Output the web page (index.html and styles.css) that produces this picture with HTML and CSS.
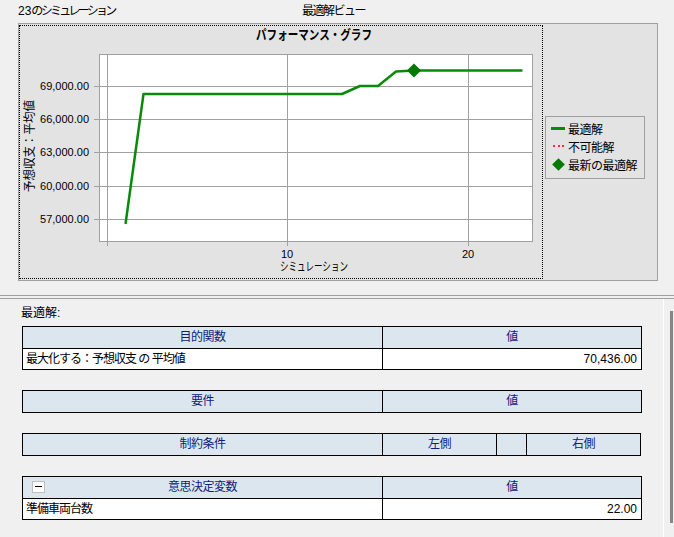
FILE: index.html
```html
<!DOCTYPE html>
<html lang="ja">

<head>
    <meta charset="UTF-8">
    <meta name="viewport" content="width=device-width, initial-scale=1.0">
    <title>最適解ビュー</title>
    <link rel="stylesheet" href="styles.css">
</head>

<body>
    <div class="top">
        <span class="sim-count"><span class="count">23</span>のシミュレーション</span>
        <span class="view-title">最適解ビュー</span>
    </div>

    <div class="chart-panel">
        <div class="plot-frame">
            <svg class="chart" viewBox="20 26 522 252" width="522" height="252">
                <text class="chart-title" x="314" y="39" text-anchor="middle" textLength="116" lengthAdjust="spacingAndGlyphs">パフォーマンス・グラフ</text>
                <rect x="99.5" y="54.5" width="433" height="187" fill="#fff" stroke="#a0a0a0" />
                <g stroke="#a0a0a0" stroke-width="1">
                    <line x1="94" y1="86.5" x2="532" y2="86.5" />
                    <line x1="94" y1="119.5" x2="532" y2="119.5" />
                    <line x1="94" y1="152.5" x2="532" y2="152.5" />
                    <line x1="94" y1="186.5" x2="532" y2="186.5" />
                    <line x1="94" y1="219.5" x2="532" y2="219.5" />
                    <line x1="107.5" y1="54" x2="107.5" y2="246" />
                    <line x1="287.5" y1="54" x2="287.5" y2="246" />
                    <line x1="468.5" y1="54" x2="468.5" y2="246" />
                </g>
                <g class="tick-label" text-anchor="end">
                    <text x="89" y="90">69,000.00</text>
                    <text x="89" y="123">66,000.00</text>
                    <text x="89" y="156">63,000.00</text>
                    <text x="89" y="190">60,000.00</text>
                    <text x="89" y="223">57,000.00</text>
                </g>
                <g class="tick-label" text-anchor="middle">
                    <text x="287" y="258">10</text>
                    <text x="468" y="258">20</text>
                </g>
                <text class="axis-title" x="314" y="271" text-anchor="middle" textLength="68" lengthAdjust="spacingAndGlyphs">シミュレーション</text>
                <text class="axis-title" x="33.5" y="146" text-anchor="middle" transform="rotate(-90 33.5 146)" textLength="92" lengthAdjust="spacingAndGlyphs">予想収支：平均値</text>
                <polyline fill="none" stroke="#0a8a0a" stroke-width="2.5" stroke-linejoin="round"
                    points="125.5,224 143.5,94 342,94 360,86 378,86 396,71.5 414,70.5 522.5,70.5" />
                <rect x="409" y="65.5" width="10" height="10" fill="#007a00" transform="rotate(45 414 70.5)" />
            </svg>
        </div>

        <div class="legend">
            <div class="legend-item"><span class="swatch"><span class="sw-line"></span></span>最適解</div>
            <div class="legend-item"><span class="swatch"><span class="sw-dots"></span></span>不可能解</div>
            <div class="legend-item"><span class="swatch"><span class="sw-diamond"></span></span>最新の最適解</div>
        </div>
    </div>

    <div class="splitter"></div>

    <div class="results">
        <div class="results-body">
            <div class="results-label">最適解:</div>

            <div class="grid-table two-col">
                <div class="head">目的関数</div>
                <div class="head last">値</div>
                <div class="cell">最大化する：予想収支 の 平均値</div>
                <div class="cell num last">70,436.00</div>
            </div>

            <div class="grid-table two-col">
                <div class="head bottom">要件</div>
                <div class="head bottom last">値</div>
            </div>

            <div class="grid-table four-col">
                <div class="head bottom">制約条件</div>
                <div class="head bottom">左側</div>
                <div class="head bottom"></div>
                <div class="head bottom last">右側</div>
            </div>

            <div class="grid-table two-col">
                <div class="head toggle-head"><span class="toggle"></span>意思決定変数</div>
                <div class="head last">値</div>
                <div class="cell">準備車両台数</div>
                <div class="cell num last">22.00</div>
            </div>
        </div>

        <div class="scrollbar">
            <div class="thumb"></div>
        </div>
    </div>
</body>

</html>
```

FILE: styles.css
```css
* {
    margin: 0;
    padding: 0;
    box-sizing: border-box;
}

body {
    width: 674px;
    height: 537px;
    overflow: hidden;
    background-color: #f0f0f0;
    font-family: "Liberation Sans", "Noto Sans CJK JP", sans-serif;
    font-size: 12px;
    color: #000;
}

.top {
    display: flex;
    height: 23px;
    padding-left: 18px;
    line-height: 22px;
}

.sim-count {
    width: 284px;
    letter-spacing: -2.7px;
}

.sim-count .count {
    letter-spacing: 0;
}

.view-title {
    letter-spacing: -1.5px;
}

/* chart */

.chart-panel {
    display: flex;
    width: 640px;
    height: 258px;
    margin-left: 18px;
    padding-top: 1px;
    background-color: #e3e3e3;
    border: 1px solid #a0a0a0;
}

.plot-frame {
    width: 524px;
    height: 254px;
    border: 1px dotted #000;
}

.chart {
    display: block;
}

.chart-title {
    font-size: 13px;
    font-weight: bold;
}

.tick-label {
    font-size: 11px;
}

.axis-title {
    font-size: 12px;
}

.legend {
    align-self: flex-start;
    width: 100px;
    height: 63px;
    margin-top: 91px;
    margin-left: 2px;
    padding: 2px 0 0 5px;
    border: 1px solid #a0a0a0;
    letter-spacing: -0.5px;
}

.legend-item {
    display: flex;
    align-items: center;
    height: 18px;
}

.swatch {
    display: flex;
    align-items: center;
    justify-content: center;
    width: 14px;
    height: 16px;
    margin-right: 3px;
}

.sw-line {
    width: 14px;
    height: 3px;
    background-color: #0a8a0a;
}

.sw-dots {
    width: 11px;
    border-top: 2px dotted #ff3030;
}

.sw-diamond {
    width: 9px;
    height: 9px;
    background-color: #007a00;
    transform: rotate(45deg);
}

/* results */

.splitter {
    height: 4px;
    margin-top: 14px;
    border-top: 1px solid #a0a0a0;
    border-bottom: 1px solid #a0a0a0;
}

.results {
    display: flex;
    height: 238px;
}

.results-body {
    flex: 1;
    padding-left: 21px;
}

.results-label {
    height: 16px;
    margin: 6px 0 5px 0;
    line-height: 16px;
}

.grid-table {
    display: grid;
    width: 620px;
    margin: 0 0 20px 1px;
    border: 1px solid #000;
}

.two-col {
    grid-template-columns: 360px 1fr;
}

.four-col {
    width: 619px;
    grid-template-columns: 360px 114px 30px 1fr;
}

.head {
    height: 22px;
    line-height: 21px;
    text-align: center;
    color: #0d2080;
    background-color: #dce6ee;
    border-right: 1px solid #000;
    border-bottom: 1px solid #000;
    letter-spacing: -0.5px;
}

.head.bottom {
    height: 21px;
    border-bottom: none;
}

.cell {
    height: 20px;
    line-height: 20px;
    padding: 0 4px 0 3px;
    background-color: #fff;
    border-right: 1px solid #000;
    letter-spacing: -1px;
}

.last {
    border-right: none;
}

.num {
    text-align: right;
    letter-spacing: 0;
}

.toggle-head {
    position: relative;
}

.toggle {
    position: absolute;
    top: 4px;
    left: 9px;
    width: 13px;
    height: 12px;
    background-color: #fff;
    border: 1px solid #c0c0c0;
}

.toggle::before {
    content: "";
    position: absolute;
    top: 4px;
    left: 2px;
    width: 7px;
    height: 1px;
    background-color: #000;
}

.scrollbar {
    width: 11px;
    padding: 12px 0 0 6px;
    border-left: 1px solid #fff;
}

.thumb {
    width: 3px;
    height: 212px;
    background-color: #868686;
}
```
